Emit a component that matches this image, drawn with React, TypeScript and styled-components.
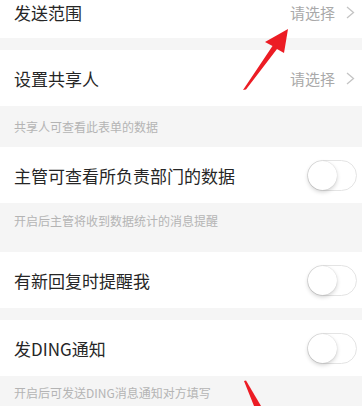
import styled, { createGlobalStyle } from "styled-components";

const GlobalStyle = createGlobalStyle`
  html, body {
    margin: 0;
    padding: 0;
    background: #f5f5f5;
    overflow: hidden;
  }
  body {
    font-family: "Noto Sans CJK SC", "Noto Sans", sans-serif;
    -webkit-font-smoothing: antialiased;
  }
`;

const Page = styled.div`
  position: relative;
  width: 362px;
  height: 406px;
  overflow: hidden;
  background: #f5f5f5;
`;

const List = styled.div`
  display: flex;
  flex-direction: column;
`;

// first row is scrolled partly out of view, so it only shows its lower part
const Row = styled.div<{ $gapBelow?: number; $scrolled?: boolean }>`
  height: ${(p) => (p.$scrolled ? 38 : 56)}px;
  display: flex;
  align-items: center;
  justify-content: space-between;
  background: #fff;
  padding: 0 7px ${(p) => (p.$scrolled ? 14 : 0)}px 14px;
  box-sizing: border-box;
  margin-bottom: ${(p) => p.$gapBelow ?? 0}px;
`;

const Label = styled.span`
  font-size: 17px;
  color: #262626;
  line-height: 1;
`;

const Value = styled.div`
  display: flex;
  align-items: center;
  gap: 11px;
  font-size: 15px;
  color: #a9a9a9;
  line-height: 1;
`;

const Caption = styled.div<{ $top: number; $bottom: number }>`
  font-size: 12px;
  color: #b4b4b4;
  line-height: 14px;
  padding: ${(p) => p.$top}px 14px ${(p) => p.$bottom}px;
`;

const Track = styled.div`
  width: 50px;
  height: 31px;
  border-radius: 16px;
  background: #fff;
  border: 1px solid #e4e4e4;
  box-sizing: border-box;
  position: relative;
  margin-right: -2px;
`;

const Knob = styled.div`
  position: absolute;
  left: 0;
  top: 0;
  width: 29px;
  height: 29px;
  border-radius: 50%;
  background: #fff;
  box-shadow: 0 2px 4px rgba(0, 0, 0, 0.18), 0 0 1px rgba(0, 0, 0, 0.2);
`;

const Overlay = styled.svg`
  position: absolute;
  left: 0;
  top: 0;
  pointer-events: none;
`;

function Chevron() {
  return (
    <svg width="9" height="13" viewBox="0 0 9 13">
      <path d="M1 1 L7.5 6.5 L1 12" fill="none" stroke="#c4c4c4" strokeWidth="1.3" />
    </svg>
  );
}

function Switch() {
  return (
    <Track>
      <Knob />
    </Track>
  );
}

export default function App() {
  return (
    <Page>
      <GlobalStyle />
      <List>
        <Row $scrolled $gapBelow={12}>
          <Label>发送范围</Label>
          <Value>
            请选择
            <Chevron />
          </Value>
        </Row>
        <Row>
          <Label>设置共享人</Label>
          <Value>
            请选择
            <Chevron />
          </Value>
        </Row>
        <Caption $top={14} $bottom={13}>共享人可查看此表单的数据</Caption>
        <Row>
          <Label>主管可查看所负责部门的数据</Label>
          <Switch />
        </Row>
        <Caption $top={11} $bottom={24}>开启后主管将收到数据统计的消息提醒</Caption>
        <Row $gapBelow={12}>
          <Label>有新回复时提醒我</Label>
          <Switch />
        </Row>
        <Row>
          <Label>发DING通知</Label>
          <Switch />
        </Row>
        <Caption $top={10} $bottom={10}>开启后可发送DING消息通知对方填写</Caption>
      </List>
      <Overlay width="362" height="406" viewBox="0 0 362 406">
        <path d="M288 29 L265 42 L272.5 46 L243 90 L246 89.5 L277 49 L284 53 Z" fill="#ec1c24" />
        <path d="M244 381 L246 380.5 L261 406 L254 406 Z" fill="#ec1c24" />
      </Overlay>
    </Page>
  );
}
